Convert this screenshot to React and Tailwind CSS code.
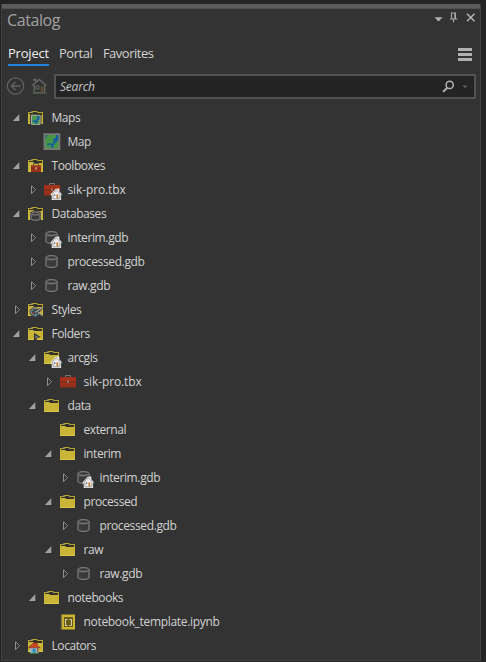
import React from "react";

const HomeBadge = () => (
  <g>
    <path d="M6.3 12.4 12 6.4l1.3 1V6.6h2v2.6l2.6 3-.8 1.2V18H7.7v-4.6z" fill="#f0f0f0" />
    <path d="M7.6 12.4 12.3 7.9l4.3 4.5M9 12.6v4.2h7v-4.2" fill="none" stroke="#858585" strokeWidth=".8" />
    <path d="M9.9 12.3h1.4v1.6H9.9z" fill="#687078" />
    <path d="M12.5 12.3h1.7v4.2h-1.7z" fill="#b87832" />
  </g>
);

const FolderShape = () => (
  <g>
    <path d="M0 2h3l1-1h5l1 1h5v12H0z" fill="#b5a233" />
    <path d="M1 3h3.5l1-1h3l1 1H14v2H1z" fill="#33312a" />
    <path d="M0 4h5l1.2 1H15v9H0z" fill="#c9b537" />
    <path d="M0 13.5h15" stroke="#dcc743" />
  </g>
);

const ToolboxShape = () => (
  <g>
    <path d="M5.5 3.5v-2h5v2" fill="none" stroke="#777" />
    <path d="M0 3h16v10.5H0z" fill="#96301a" />
    <path d="M0 3h16v4.5H0z" fill="#a53319" />
    <path d="M0 7.8h16" stroke="#70291b" strokeWidth=".7" />
    <path d="M7.3 6.2h1.4v3H7.3z" fill="#8b8580" />
  </g>
);

const CylinderShape = () => (
  <g fill="#393939" stroke="#929292" strokeWidth="1">
    <path d="M2 3.5v8.2c0 2.2 11 2.2 11 0V3.5" />
    <ellipse cx="7.5" cy="3.5" rx="5.5" ry="1.9" />
    <path d="M2.6 5.2c1.8 1.7 8 1.7 9.8 0" fill="none" stroke="#626262" strokeWidth=".6" />
  </g>
);

const MapShape = () => (
  <g>
    <path d="M.3.2h15v15H.3z" fill="#479646" stroke="#7a7a7a" strokeWidth="1.8" />
    <path d="M14.3 1.2v6h-1.8v2h-2v2H9.2v3H7.2v-3.2H5.4l-2.2.4V9.8l3.3-.8 1.8 1 1-2.6V4.7l2.5-.9V1.2z" fill="#195e9d" />
    <path d="M1.3 1.2h3l-3 4z" fill="#2f6d75" />
  </g>
);

function Icon({ type, home }) {
  return (
    <svg className="h-4 w-4 shrink-0 overflow-visible" viewBox="0 0 16 16">
      {type === "folder" && <FolderShape />}
      {type === "maps" && (
        <g>
          <FolderShape />
          <path d="M2 4.2h11.5V14.5H2z" fill="#3a3a34" />
          <path d="M3.5 5.3h8.6v9H3.5z" fill="#4b9852" stroke="#b0b3a5" strokeWidth="1" />
          <path d="M11.6 5.8V9.2l-1.8 1.2-1.2 3.4H7v-1.8H4.5v-1.3l2.4-.7.9.5 1.2-2 .4-2.7z" fill="#17609d" />
        </g>
      )}
      {type === "map" && <g transform="translate(.1 -.1)"><MapShape /></g>}
      {type === "toolboxes" && (
        <g>
          <FolderShape />
          <path d="M5.5 8V5.5h5V8" fill="none" stroke="#5d5848" />
          <path d="M3 7.3h10V14H3z" fill="#9c321a" />
          <path d="M3 10.2h3.5M9.5 10.2h3.5" stroke="#672719" strokeWidth=".7" />
          <path d="M7.3 9.2h1.4v2.2H7.3z" fill="#bab0a1" />
        </g>
      )}
      {type === "toolbox" && <ToolboxShape />}
      {type === "databases" && (
        <g>
          <FolderShape />
          <path d="M2 7.2C2 4.3 13 4.3 13 7.2v6c0 2.9-11 2.9-11 0z" fill="#343434" />
          <g fill="#3a3a3a" stroke="#a2a2a2" strokeWidth=".8">
            <path d="M3 7.5v5.2c0 2 9 2 9 0V7.5" />
            <ellipse cx="7.5" cy="7.5" rx="4.5" ry="1.5" />
          </g>
        </g>
      )}
      {type === "database" && <CylinderShape />}
      {type === "styles" && (
        <g>
          <FolderShape />
          <path d="M1.4 8.3 4.6 5.6h4l1 1.5 3.8-1.6L15 6.7l-3.8 4 3 2v1.2h-3.3l-2.5 1H4.6L2 12z" fill="#3b4141" />
          <path d="M8.7 6.7C5.4 5 2 8.2 3.2 11c.7 1.8 3.6 2 4.6 2.7l1.7-1.8 1.4-.1" fill="none" stroke="#9aa09e" />
          <path d="m7 10.4 6.8-4.5M10 9.9l3.8 3.1" stroke="#a5a5a5" strokeWidth="1.2" />
          <path d="M4 8.7h1.4M6.2 7.2h1.3" stroke="#5d95b5" />
          <path d="M4.6 11H6" stroke="#d55432" />
          <path d="M7 12h1.4v2.4H7z" fill="#4a91b9" />
          <path d="M13 7v2" stroke="#bb7942" />
        </g>
      )}
      {type === "folders" && (
        <g>
          <FolderShape />
          <path d="M6 6.8 12.6 11l-3.4 1-1 2.7H6z" fill="#303030" />
          <path d="m7.5 8.9 2.8 2-1.5.7-1.3 1.8z" fill="#8d8d8d" />
        </g>
      )}
      {type === "notebook" && (
        <g>
          <path d="M1.5.5H15v15H1.5z" fill="#cdb62e" />
          <path d="M4 3h9v10H4z" fill="#6b5d17" />
          <path d="M.4 2.1h2M.4 4.6h2M.4 7.1h2M.4 9.6h2M.4 12.1h2M.4 14.5h2" stroke="#777252" strokeWidth=".9" />
          <path d="M7.5 5.5h-2v6h2M9.5 5.5h2v6h-2" fill="none" stroke="#d8d3b4" strokeWidth="1" />
        </g>
      )}
      {type === "locators" && (
        <g>
          <FolderShape />
          <path d="M2 9h8.7v6H2z" fill="#a4b2b7" />
          <path d="M.3 9.8 5.5 4.8l1.5.7v-.7h2.2v2.6l3 2.4z" fill="#cc461f" stroke="#7c301c" strokeWidth=".6" />
          <path d="M4.6 10.8h3v3.8h-3z" fill="#238dcc" />
          <path d="M9.3 10.2h1v4h-1z" fill="#873c2c" />
          <path d="M1.7 15.2h8.5" stroke="#4c944e" />
        </g>
      )}
      {home && <HomeBadge />}
    </svg>
  );
}

function Arrow({ state }) {
  if (state === "open") {
    return <svg className="h-2 w-2 shrink-0" viewBox="0 0 8 8"><path d="M7.3.3V7H.8z" fill="#a2a2a2" /></svg>;
  }
  if (state === "closed") {
    return <svg className="h-2.5 w-2 shrink-0" viewBox="0 0 8 10"><path d="M3.5.7v8l4-4z" fill="#303030" stroke="#999" strokeWidth=".9" /></svg>;
  }
  return <span className="w-2 shrink-0" />;
}

const rows = [
  ["Maps", "maps", "open", "pl-[10px]"],
  ["Map", "map", "none", "pl-[26px]"],
  ["Toolboxes", "toolboxes", "open", "pl-[10px]"],
  ["sik-pro.tbx", "toolbox", "closed", "pl-[26px]", true],
  ["Databases", "databases", "open", "pl-[10px]"],
  ["interim.gdb", "database", "closed", "pl-[26px]", true],
  ["processed.gdb", "database", "closed", "pl-[26px]"],
  ["raw.gdb", "database", "closed", "pl-[26px]"],
  ["Styles", "styles", "closed", "pl-[10px]"],
  ["Folders", "folders", "open", "pl-[10px]"],
  ["arcgis", "folder", "open", "pl-[26px]", true],
  ["sik-pro.tbx", "toolbox", "closed", "pl-[42px]"],
  ["data", "folder", "open", "pl-[26px]"],
  ["external", "folder", "none", "pl-[42px]"],
  ["interim", "folder", "open", "pl-[42px]"],
  ["interim.gdb", "database", "closed", "pl-[58px]", true],
  ["processed", "folder", "open", "pl-[42px]"],
  ["processed.gdb", "database", "closed", "pl-[58px]"],
  ["raw", "folder", "open", "pl-[42px]"],
  ["raw.gdb", "database", "closed", "pl-[58px]"],
  ["notebooks", "folder", "open", "pl-[26px]"],
  ["notebook_template.ipynb", "notebook", "none", "pl-[42px]"],
  ["Locators", "locators", "closed", "pl-[10px]"],
];

const labelTracking = {
  toolbox: "tracking-[-0.12px]",
  database: "tracking-[-0.37px]",
  notebook: "tracking-[-0.32px]",
};

export default function App() {
  return (
    <div className="h-[662px] w-[486px] overflow-hidden bg-[#242424] pt-1 pr-[5px] pl-px font-['Open_Sans',sans-serif] text-[#d2d2d2]">
      <div className="flex h-[657px] flex-col border-x border-b border-[#3f3f46] bg-[#333333]">
        <div className="h-[5px] shrink-0 border-b border-[#505050] bg-[#5c5c5c]" />
        <header className="flex h-[31px] shrink-0 items-start justify-between pr-[2px] pl-[5px]">
          <h1 className="text-[16px] leading-[22px] tracking-[-0.4px] text-[#a2a2a2]">Catalog</h1>
          <svg className="mt-[2px] h-4 w-[44px]" viewBox="0 0 44 16">
            <path d="M.5 6.3h8l-4 4.2z" fill="#b0b0b0" />
            <path d="M17.5 2h4v6h-4zM16 8h7.5M19.5 8v3.6" fill="none" stroke="#a8a8a8" strokeWidth="1.1" />
            <path d="M21 2v6" stroke="#a8a8a8" strokeWidth="1.5" />
            <path d="m33 2.7 7.5 7.5m0-7.5L33 10.2" stroke="#b5b5b5" strokeWidth="1.5" />
          </svg>
        </header>
        <nav className="flex h-[31px] shrink-0 items-start pr-[8px] pl-[6px] text-[13px] leading-[18px] tracking-[-0.2px]">
          <span className="mr-[10px] h-[26px] border-b-2 border-[#2085df] pt-[4px] text-[#f0f0f0]">Project</span>
          <span className="mr-[10.5px] pt-[4px] tracking-[-0.45px]">Portal</span>
          <span className="pt-[4px] tracking-[-0.5px]">Favorites</span>
          <svg className="mt-[8px] ml-auto h-[14px] w-[14px]" viewBox="0 0 14 14">
            <path d="M0 1.5h14M0 6.5h14M0 11.5h14" stroke="#b0b0b0" strokeWidth="3" />
          </svg>
        </nav>
        <div className="flex h-[35px] shrink-0 items-start pt-[3px] pr-[4px] pl-[4px]">
          <svg className="mt-[2px] h-[20px] w-[48px] shrink-0" viewBox="0 0 48 20">
            <circle cx="9.5" cy="10" r="8.2" fill="none" stroke="#626262" strokeWidth="1.2" />
            <path d="M14.5 10h-9m4-4-4 4 4 4" fill="none" stroke="#626262" strokeWidth="1.5" />
            <path d="m26 9.5 7.3-6 7 6M28.2 9v7.7h10.4V9M28 5V3.5h2V6" fill="none" stroke="#646464" strokeWidth="1.4" />
            <path d="M30 10h3v3h-3z" fill="none" stroke="#666" />
            <path d="M35 10.5h2v6h-2z" fill="#55483b" stroke="#69523a" strokeWidth=".5" />
            <path d="M25.5 17.2h15.5" stroke="#485b42" />
          </svg>
          <div className="flex h-[25px] flex-1 items-center border-2 border-[#525252] bg-[#242424] pr-[5px] pl-[4px]">
            <span className="pt-px text-[12px] leading-[20px] tracking-[-0.2px] text-[#c5c5c5] italic">Search</span>
            <svg className="ml-auto h-4 w-7" viewBox="0 0 28 16">
              <circle cx="8.7" cy="5.9" r="3.6" fill="none" stroke="#b5b5b5" strokeWidth="1.5" />
              <path d="m6.3 8.7-4.2 4.2" stroke="#b5b5b5" strokeWidth="2" />
              <path d="M21.5 6.6h5L24 9.2z" fill="#606060" />
            </svg>
          </div>
        </div>
        <main className="shrink-0">
          {rows.map(([name, icon, state, indent, home], i) => (
            <div key={i} className={"flex h-6 items-center " + indent}>
              <Arrow state={state} />
              <span className="ml-2 flex h-4 w-4"><Icon type={icon} home={home} /></span>
              <span className={"ml-[7.5px] text-[12px] leading-6 whitespace-nowrap " + (labelTracking[icon] || "tracking-[-0.42px]")}>{name}</span>
            </div>
          ))}
        </main>
      </div>
    </div>
  );
}
